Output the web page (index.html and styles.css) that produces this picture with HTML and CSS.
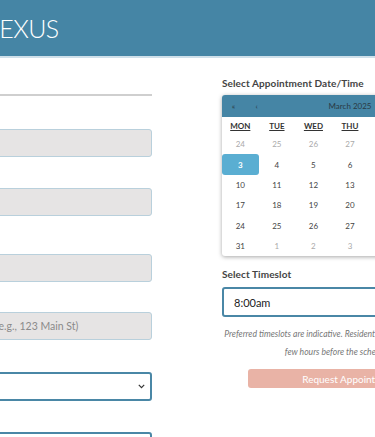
FILE: index.html
```html
<!DOCTYPE html>
<html>
<head>
<meta charset="utf-8">
<link rel="stylesheet" href="styles.css">
</head>
<body>
<header class="topbar"><span class="brand">NEXUS</span></header>
<main class="page">
  <section class="left">
    <div class="rule-box"></div>
    <div class="field f1"><div class="input"></div></div>
    <div class="field f2"><div class="input"></div></div>
    <div class="field f3"><div class="input"></div></div>
    <div class="field f4"><div class="input"><span class="ph">(e.g., 123 Main St)</span></div></div>
    <div class="field f5"><div class="select">
      <svg class="chev" width="7" height="5" viewBox="0 0 7 5"><path d="M0.8 0.9 L3.5 3.6 L6.2 0.9" fill="none" stroke="#333" stroke-width="1.2"/></svg>
    </div></div>
    <div class="field f6"><div class="select"></div></div>
  </section>
  <section class="right">
    <h2 class="label">Select Appointment Date/Time</h2>
    <div class="cal">
      <div class="cal-head">
        <span class="nav">«</span><span class="nav">‹</span>
        <span class="title">March 2025</span>
        <span class="nav">›</span><span class="nav">»</span>
      </div>
      <div class="grid">
        <span class="dn">MON</span><span class="dn">TUE</span><span class="dn">WED</span><span class="dn">THU</span><span class="dn">FRI</span><span class="dn">SAT</span><span class="dn">SUN</span>
        <span class="d o">24</span><span class="d o">25</span><span class="d o">26</span><span class="d o">27</span><span class="d o">28</span><span class="d">1</span><span class="d">2</span>
        <span class="d sel">3</span><span class="d">4</span><span class="d">5</span><span class="d">6</span><span class="d">7</span><span class="d">8</span><span class="d">9</span>
        <span class="d">10</span><span class="d">11</span><span class="d">12</span><span class="d">13</span><span class="d">14</span><span class="d">15</span><span class="d">16</span>
        <span class="d">17</span><span class="d">18</span><span class="d">19</span><span class="d">20</span><span class="d">21</span><span class="d">22</span><span class="d">23</span>
        <span class="d">24</span><span class="d">25</span><span class="d">26</span><span class="d">27</span><span class="d">28</span><span class="d">29</span><span class="d">30</span>
        <span class="d">31</span><span class="d o">1</span><span class="d o">2</span><span class="d o">3</span><span class="d o">4</span><span class="d o">5</span><span class="d o">6</span>
      </div>
    </div>
    <h2 class="label ts">Select Timeslot</h2>
    <div class="timeslot">8:00am</div>
    <p class="note">Preferred timeslots are indicative. Residents will be contacted by staff a<br>few hours before the scheduled time.</p>
    <button class="btn">Request Appointment</button>
  </section>
</main>
</body>
</html>
```
FILE: styles.css
```css
html, body { margin: 0; padding: 0; }
body {
  width: 375px;
  height: 437px;
  overflow: hidden;
  background: #fff;
  font-family: Lato, "Open Sans", sans-serif;
  color: #444;
}
.topbar {
  height: 56px;
  background: #4585a5;
  border-bottom: 2px solid #cfe0ea;
  display: flex;
  align-items: center;
  box-sizing: content-box;
}
.brand {
  color: #fff;
  font-family: Lato, sans-serif;
  font-size: 25px;
  font-weight: 300;
  letter-spacing: -0.6px;
  margin-left: -19px;
}
.page {
  display: flex;
  gap: 70px;
  margin-left: -148px;
  width: 700px;
}
.left { width: 300px; flex: none; }
.rule-box {
  height: 36px;
  border-bottom: 2px solid #cfcfcf;
}
.f1 { margin-top: 33px; }
.f2 { margin-top: 31px; }
.f3 { margin-top: 38px; }
.f4 { margin-top: 30px; }
.f5 { margin-top: 32px; }
.f6 { margin-top: 31px; }
.input {
  height: 28px;
  box-sizing: border-box;
  background: #e6e4e4;
  border: 1px solid #b9d0dc;
  border-radius: 3px;
  display: flex;
  align-items: center;
  padding-left: 143px;
}
.ph { font-size: 10.5px; color: #8a8a8a; }
.select {
  height: 29px;
  box-sizing: border-box;
  background: #fff;
  border: 2px solid #4a87a6;
  border-radius: 3px;
  display: flex;
  align-items: center;
  justify-content: flex-end;
  padding-right: 5px;
}
.right { width: 256px; flex: none; }
.label {
  margin: 18px 0 0;
  font-size: 10px;
  font-weight: 700;
  color: #444;
  line-height: 14px;
  letter-spacing: 0.1px;
}
.cal {
  margin-top: 5px;
  border-radius: 3px;
  box-shadow: 0 1px 4px rgba(0,0,0,0.35);
  overflow: hidden;
  background: #fff;
}
.cal-head {
  height: 22px;
  background: #4585a5;
  display: flex;
  align-items: center;
  font-size: 8px;
  color: #2a3a44;
}
.nav { width: 23px; text-align: center; }
.title { flex: 1; text-align: center; }
.grid {
  display: grid;
  grid-template-columns: repeat(7, 1fr);
  grid-template-rows: 17px;
  grid-auto-rows: 20.35px;
}
.dn {
  font-size: 8px;
  font-weight: 700;
  text-decoration: underline;
  color: #333;
  display: flex;
  align-items: center;
  justify-content: center;
  padding-top: 1px;
}
.d {
  font-size: 8px;
  color: #444;
  display: flex;
  align-items: center;
  justify-content: center;
}
.d.o { color: #aaa; }
.d.sel {
  background: #5aaed2;
  color: #fff;
  font-weight: 700;
  border-radius: 3px;
}
.label.ts { margin-top: 11px; }
.timeslot {
  margin-top: 6px;
  height: 30px;
  box-sizing: border-box;
  border: 2px solid #4a87a6;
  border-radius: 3px;
  display: flex;
  align-items: center;
  padding-left: 10px;
  font-size: 11px;
  color: #222;
}
.note {
  margin: 8px 0 0;
  text-align: center;
  font-style: italic;
  font-size: 8.6px;
  line-height: 18px;
  color: #777;
  white-space: nowrap;
}
.btn {
  display: block;
  margin: 8px auto 0;
  width: 204px;
  height: 19px;
  border: none;
  border-radius: 3px;
  background: #e9b3a6;
  color: #fff;
  font-family: Lato, sans-serif;
  font-size: 10px;
  padding: 0;
}
```
